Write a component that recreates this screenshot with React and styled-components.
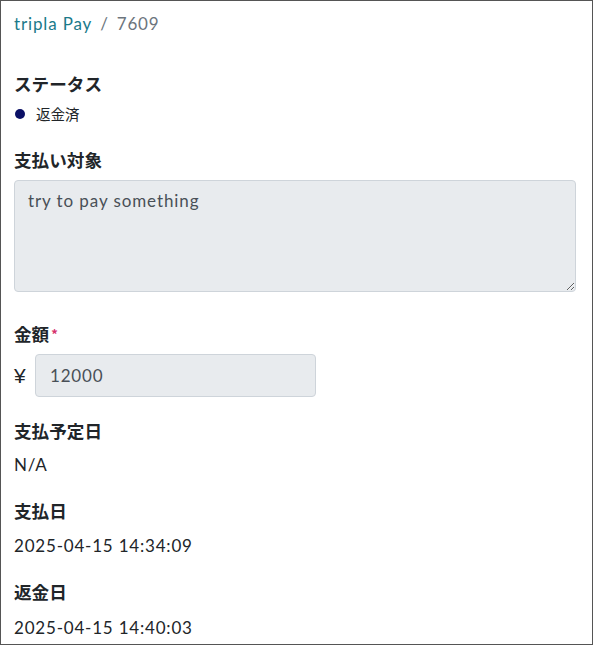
import React from "react";
import styled, { createGlobalStyle } from "styled-components";

const GlobalStyle = createGlobalStyle`
  html, body {
    margin: 0;
    padding: 0;
    background: #fff;
  }
  * {
    box-sizing: border-box;
  }
`;

const Frame = styled.div`
  width: 593px;
  height: 645px;
  border: 1px solid #555;
  padding: 11px 16px 0 13px;
  font-family: Lato, "Noto Sans CJK JP", sans-serif;
  color: #212529;
  overflow: hidden;
`;

const Breadcrumb = styled.div`
  display: flex;
  align-items: center;
  gap: 8px;
  font-size: 17px;
  line-height: 24px;
  letter-spacing: 0.85px;
  margin-bottom: 36px;
`;

const Crumb = styled.span`
  color: ${(p) => (p.$link ? "#1b7a8a" : "#6c757d")};
`;

const Field = styled.div`
  display: flex;
  flex-direction: column;
  gap: ${(p) => p.$gap || 9}px;
  margin-bottom: ${(p) => p.$after || 22}px;
`;

const Label = styled.div`
  font-family: "Noto Sans CJK JP", sans-serif;
  font-weight: 700;
  font-size: 17.6px;
  line-height: 24px;
  display: flex;
  align-items: flex-start;
`;

const Required = styled.span`
  color: #d6336c;
  font-size: 13px;
  line-height: 13px;
  margin: 5px 0 0 2px;
`;

const Status = styled.div`
  display: flex;
  align-items: center;
  gap: 11px;
  font-family: "Noto Sans CJK JP", sans-serif;
  font-size: 14.5px;
  line-height: 20px;
`;

const Dot = styled.span`
  width: 10px;
  height: 10px;
  border-radius: 50%;
  background: #0b1066;
  margin-left: 1px;
`;

const TextArea = styled.textarea`
  width: 100%;
  height: 112px;
  margin: 0;
  display: block;
  background: #e8ebee;
  border: 1px solid #ced4da;
  border-radius: 4px;
  padding: 8px 13px 6px;
  font-family: Lato, "Noto Sans CJK JP", sans-serif;
  font-size: 17px;
  line-height: 24px;
  letter-spacing: 0.9px;
  color: #495057;
  outline: none;
`;

const AmountRow = styled.div`
  display: flex;
  align-items: center;
  gap: 8px;
`;

const Yen = styled.span`
  font-family: "Liberation Sans", sans-serif;
  font-size: 21px;
  line-height: 24px;
  width: 13px;
`;

const Input = styled.input`
  width: 281px;
  height: 43px;
  background: #e8ebee;
  border: 1px solid #ced4da;
  border-radius: 4px;
  padding: 0 14px;
  font-family: Lato, sans-serif;
  font-size: 17px;
  letter-spacing: 0.8px;
  color: #495057;
  outline: none;
`;

const Value = styled.div`
  font-size: 17px;
  line-height: 24px;
  letter-spacing: 0.8px;
  color: #212529;
`;

export default function App() {
  return (
    <>
      <GlobalStyle />
      <Frame>
        <Breadcrumb>
          <Crumb $link>tripla Pay</Crumb>
          <Crumb>/</Crumb>
          <Crumb>7609</Crumb>
        </Breadcrumb>

        <Field $gap={8} $after={24}>
          <Label>ステータス</Label>
          <Status>
            <Dot />
            返金済
          </Status>
        </Field>

        <Field $gap={8} $after={30}>
          <Label>支払い対象</Label>
          <TextArea readOnly value="try to pay something" />
        </Field>

        <Field $gap={8}>
          <Label>
            金額<Required>*</Required>
          </Label>
          <AmountRow>
            <Yen>¥</Yen>
            <Input readOnly value="12000" />
          </AmountRow>
        </Field>

        <Field $gap={10}>
          <Label>支払予定日</Label>
          <Value>N/A</Value>
        </Field>

        <Field $gap={11}>
          <Label>支払日</Label>
          <Value>2025-04-15 14:34:09</Value>
        </Field>

        <Field $gap={12}>
          <Label>返金日</Label>
          <Value>2025-04-15 14:40:03</Value>
        </Field>
      </Frame>
    </>
  );
}
